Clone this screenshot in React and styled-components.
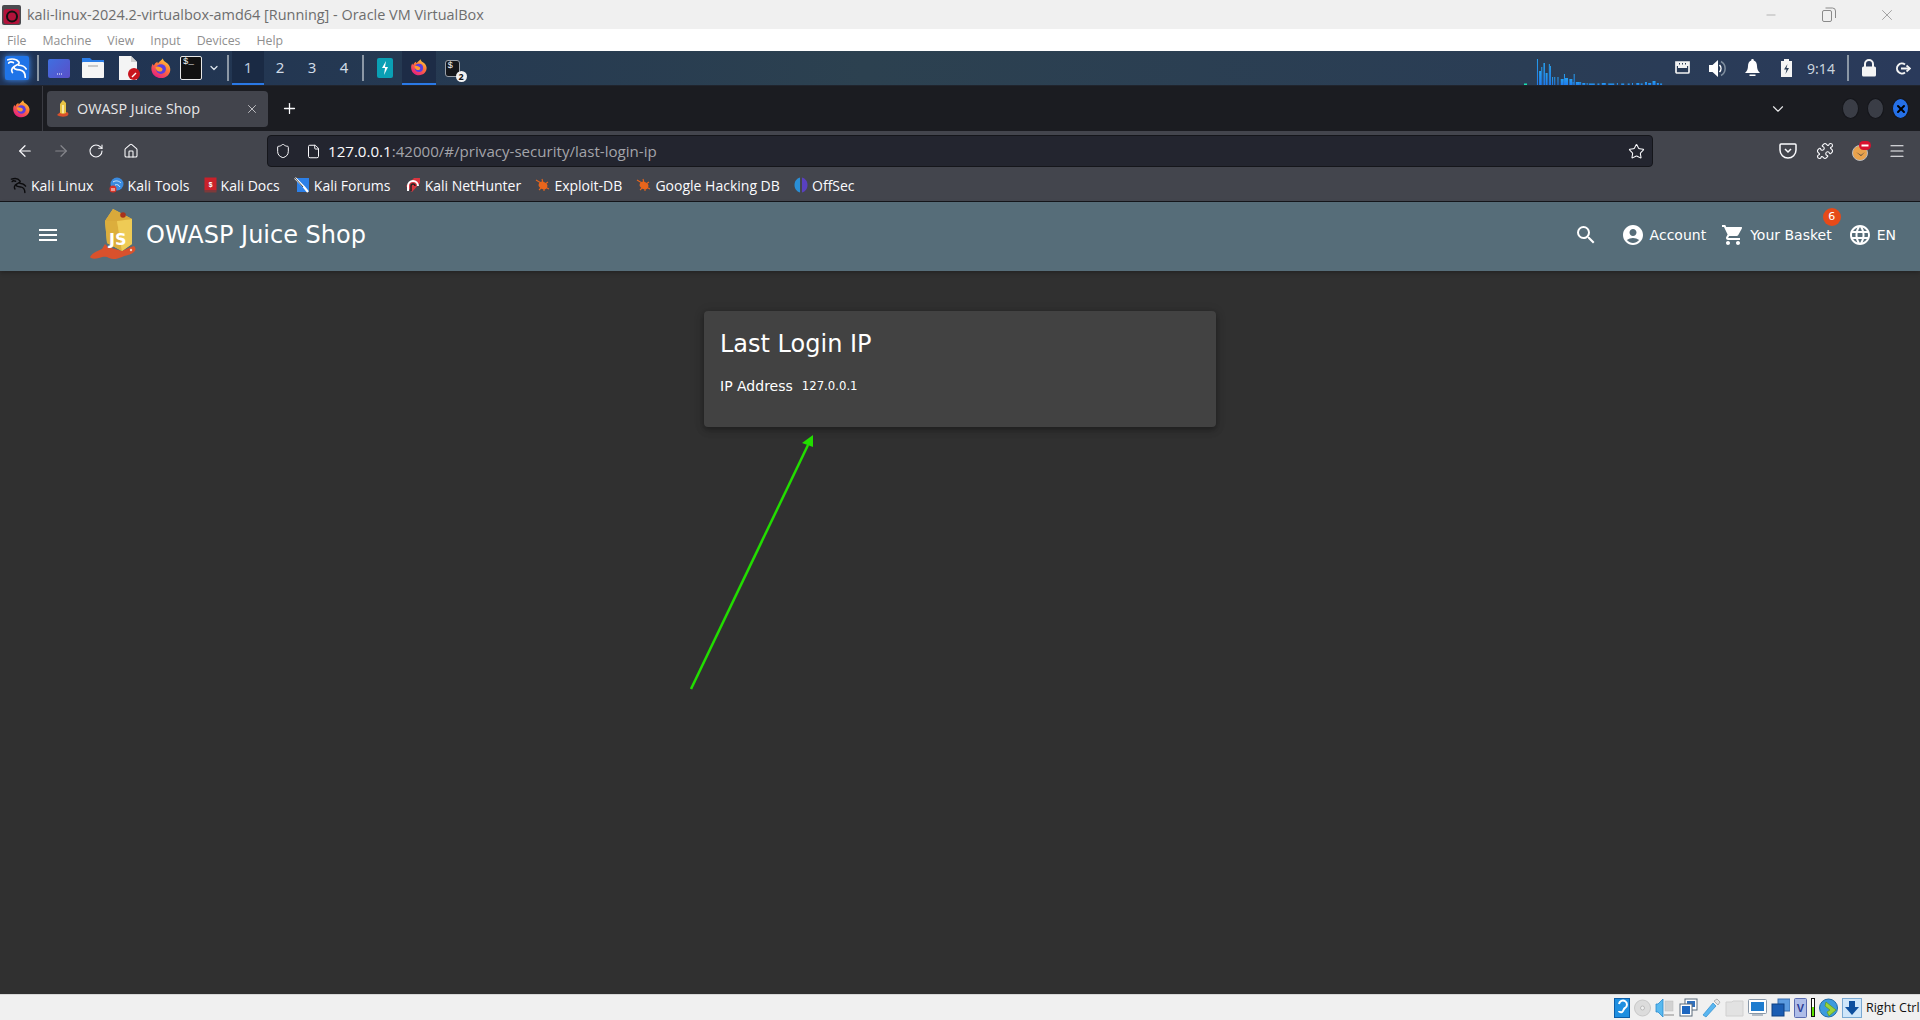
import React from "react";
import styled, { createGlobalStyle } from "styled-components";
import { ArrowLeft, ArrowRight, RotateCw, Home, Shield, File, Star, Puzzle, Menu, X, Plus, ChevronDown, Minus } from "lucide-react";
import { MdMenu, MdSearch, MdAccountCircle, MdShoppingCart, MdLanguage } from "react-icons/md";

const Global = createGlobalStyle`
  html, body { margin: 0; padding: 0; height: 100%; background: #303030; overflow: hidden; }
  #root { height: 100%; }
  * { box-sizing: border-box; }
`;

const Page = styled.div`
  height: 1020px; width: 1920px; display: flex; flex-direction: column;
  font-family: "Noto Sans", "Open Sans", sans-serif;
`;

/* host window */
const TitleBar = styled.div`
  height: 29px; background: #f0f0f0; display: flex; align-items: center; padding-left: 2px;
`;
const TitleText = styled.span`
  margin-left: 6px; font-size: 14.45px; color: #6d6d6d; font-family: "Open Sans", sans-serif; white-space: nowrap;
`;
const WinButtons = styled.div`
  margin-left: auto; display: flex; align-items: center; color: #8a8a8a;
`;
const WinButton = styled.span`
  width: 58px; display: flex; justify-content: center;
`;
const MenuBar = styled.div`
  height: 22px; background: #fff; display: flex; align-items: center; padding-left: 7px; gap: 16px;
  font-family: "Open Sans", sans-serif; font-size: 12.3px; color: #8f8f8f;
`;

/* guest panel */
const Panel = styled.div`
  height: 35px; display: flex; align-items: stretch; color: #dce4ee;
  background: linear-gradient(90deg, #1f3253 0%, #2c4150 45%, #2a3d55 80%, #2a3a5b 100%);
  border-bottom: 1px solid #20242d;
`;
const Slot = styled.div`
  width: ${p => p.$w}px; flex: none; display: flex; align-items: center; justify-content: center;
`;
const PanelSep = styled.div`
  width: 2px; height: 26px; background: #8b97a5; flex: none; align-self: center;
  margin: 0 ${p => p.$r ?? 3}px 0 ${p => p.$l ?? 3}px;
`;
const Workspace = styled.div`
  width: 32px; flex: none; display: flex; align-items: center; justify-content: center; font-size: 15px;
  color: ${p => p.$active ? "#b9c9dc" : "#d0dbe7"};
  background: ${p => p.$active ? "#1a2a44" : "transparent"};
  border-bottom: 2px solid ${p => p.$active ? "#2a79e6" : "transparent"};
`;
const ActiveApp = styled(Slot)`
  background: #1d2c46; border-bottom: 2px solid #2a79e6;
`;
const PanelRight = styled.div`
  margin-left: auto; display: flex; align-items: stretch;
`;
const Graph = styled.svg`
  width: 142px; height: 34px; flex: none; display: block;
`;
const Clock = styled(Slot)`
  font-size: 14px; color: #c9d3dd;
`;
const KaliTile = styled.div`
  width: 24px; height: 24px; border-radius: 2px; background: #1f74e8; box-shadow: 0 0 6px #3f8ffb;
  display: flex; align-items: center; justify-content: center;
`;
const Tile = styled.div`
  width: ${p => p.$w}px; height: ${p => p.$h}px; background: ${p => p.$bg}; border: ${p => p.$bd || "none"}; border-radius: ${p => p.$r || 2}px;
  position: relative; flex: none;
`;
const TermText = styled.span`
  position: absolute; left: 2px; top: 0; font: 9px "Liberation Mono", monospace; color: #fff;
`;
const CountBadge = styled.span`
  position: absolute; right: -8px; bottom: -6px; width: 11px; height: 11px; border-radius: 50%;
  background: #f2f2f2; color: #111; font-size: 9px; font-weight: 700; line-height: 11px; text-align: center;
`;

/* browser */
const TabStrip = styled.div`
  height: 45px; background: #1b1c21; display: flex; align-items: center; position: relative;
`;
const TabDivider = styled.div`
  width: 1px; height: 45px; background: #3a3b42; flex: none; margin-right: 4px;
`;
const Tab = styled.div`
  width: 221px; height: 36px; background: #42444c; border-radius: 4px; display: flex; align-items: center;
  padding-left: 10px; color: #e6e6e8; flex: none;
`;
const TabLabel = styled.span`
  margin-left: 8px; flex: 1; white-space: nowrap; font-family: "Open Sans", sans-serif; font-size: 14.4px;
`;
const TabClose = styled.span`
  width: 32px; display: flex; justify-content: center; color: #cfcfd2;
`;
const StripRight = styled.div`
  margin-left: auto; display: flex; align-items: center;
`;
const Chevron = styled.span`
  display: flex; color: #e8e8ea; margin-right: 55px;
`;
const WinDots = styled.div`
  display: flex; gap: 8px; padding-right: 11px;
`;
const WinDot = styled.span`
  width: 17px; height: 21px; border-radius: 50%; background: ${p => p.$bg}; border: 1px solid #14151a;
  display: flex; align-items: center; justify-content: center; color: #000;
`;
const NavBar = styled.div`
  height: 40px; background: #43454d; display: flex; align-items: center; color: #fbfbfe;
`;
const NavSlot = styled.div`
  width: ${p => p.$w}px; flex: none; display: flex; justify-content: center; align-items: center;
  color: ${p => p.$dim ? "#85868c" : "#fbfbfe"};
`;
const UrlBar = styled.div`
  width: 1386px; height: 32px; background: #23252f; border: 1px solid #15161b; border-radius: 4px;
  display: flex; align-items: center; flex: none; font-size: 15.1px; color: #a3a4aa; font-family: "Open Sans", sans-serif;
`;
const UrlText = styled.span`
  padding-bottom: 1px;
`;
const UrlHost = styled.span`
  color: #fbfbfe;
`;
const UrlStar = styled.span`
  margin-left: auto; width: 32px; display: flex; justify-content: center; color: #fbfbfe;
`;
const Bookmarks = styled.div`
  height: 31px; background: #43454d; display: flex; align-items: center; padding: 0 0 2px 10px;
  border-bottom: 1px solid #15161b; color: #fbfbfe; font-size: 14px; font-family: "Open Sans", sans-serif;
`;
const Bookmark = styled.div`
  display: flex; align-items: center; gap: 4px; margin-right: 14.2px; white-space: nowrap;
`;

/* juice shop */
const ShopBar = styled.header`
  height: 69px; flex: none; background: #566d79; display: flex; align-items: center; color: #fff; padding-bottom: 4px;
  font-family: "DejaVu Sans", sans-serif; box-shadow: 0 2px 4px rgba(0,0,0,.25); position: relative; z-index: 1;
`;
const MenuButton = styled.span`
  display: flex; margin-left: 36px; width: 54px;
`;
const ShopTitle = styled.span`
  margin-left: 10px; font-size: 24px; white-space: nowrap;
`;
const ShopActions = styled.div`
  margin-left: auto; display: flex; align-items: center; font-size: 14px; padding-right: 24px;
`;
const ShopAction = styled.div`
  display: flex; align-items: center; gap: ${p => p.$gap ?? 6}px; margin-left: ${p => p.$ml}px; position: relative;
`;
const Badge = styled.span`
  position: absolute; right: -9px; top: -15px; width: 18px; height: 18px; border-radius: 50%;
  background: #e64a19; color: #fff; font-size: 11px; text-align: center; line-height: 18px;
`;
const Main = styled.main`
  flex: 1; background: #303030; position: relative; display: flex; justify-content: center; align-items: flex-start;
  padding-top: 40px;
`;
const Card = styled.section`
  width: 512px; height: 116px; background: #424242; border-radius: 4px; padding: 18px 16px; color: #fff;
  font-family: "DejaVu Sans", sans-serif;
  box-shadow: 0 2px 4px rgba(0,0,0,.2), 0 4px 8px rgba(0,0,0,.14), 0 1px 12px rgba(0,0,0,.12);
`;
const CardTitle = styled.h1`
  margin: 0; font-size: 24px; font-weight: 400; line-height: 30px;
`;
const CardRow = styled.div`
  margin-top: 16px; display: flex; align-items: center; gap: 9px; font-size: 14px; line-height: 20px;
`;
const CardValue = styled.span`
  font-size: 11.7px; padding-top: 1px;
`;
const ArrowLayer = styled.svg`
  position: absolute; left: 0; top: 0; width: 1920px; height: 723px; pointer-events: none;
`;

/* status bar */
const StatusBar = styled.footer`
  height: 26px; flex: none; background: #f0f0f0; border-top: 1px solid #d8d8d8; display: flex; align-items: center;
  justify-content: flex-end; font-family: "Open Sans", "Liberation Sans", sans-serif; font-size: 12.5px; color: #111;
`;
const StatusIcons = styled.div`
  display: flex; align-items: center; gap: 4px; margin-right: 4px;
`;
const StatusText = styled.span`
  white-space: nowrap; width: 54px; overflow: hidden;
`;
const Led = styled.div`
  width: 4px; height: 19px; border: 1px solid #111; background: linear-gradient(180deg, #fff 45%, #5ce000 45%);
`;

const Fox = ({ s = 22 }) => (
  <svg width={s} height={s} viewBox="0 0 24 24">
    <defs>
      <linearGradient id="fxa" x1="0.8" y1="0" x2="0.2" y2="1"><stop offset="0" stopColor="#ffd43a" /><stop offset=".45" stopColor="#ff7139" /><stop offset="1" stopColor="#e31587" /></linearGradient>
    </defs>
    <path d="M12 23C5.9 23 1.5 18.3 1.5 12.5c0-2 .6-3.8 1.6-5.2.2 1 .6 1.7 1.2 2.1.5-2 2-3.6 3.9-4.3-.2 1 0 1.6.5 2C9.5 5 12 4.2 14 1.5c.5 2.2 1.5 3 3.2 4.2 2.9 1.9 4.5 4 4.9 7 .5 5.6-4.1 10.3-10.1 10.3z" fill="url(#fxa)" />
    <circle cx="12" cy="13.2" r="5.4" fill="#5a3ee0" />
    <path d="M6 11c2-1.2 3.5-.6 5.5.2 2 .8 3 2.4 1.5 4-1.6 1.2-4.4.8-5.8-1C6.4 13.200 6 12 6 11z" fill="#ff9a30" />
  </svg>
);

const JuiceLogo = () => (
  <svg width="46" height="52" viewBox="0 0 46 52">
    <path d="M0 48c2-4 7-6 12-8l3-5 3 3 14 4 9-4 3-1c2 2 2 4 0 6-3 3-8 3-12 5-5 2-9 3-13 1-3-2-6-1-10 0-4 1-8 1-9-1z" fill="#d9512c" />
    <circle cx="41" cy="41" r="1.200" fill="#f3d0c4" />
    <path d="M15 12L23 0l19 10v25l-10 7-15-8z" fill="#e8c04a" />
    <path d="M15 12l12 0 5 30-15-8z" fill="#dcae3c" />
    <path d="M27 12l15-2v25l-10 7z" fill="#eecb55" />
    <path d="M15 12L23 0l19 10-15 2z" fill="#d9a93a" />
    <circle cx="33" cy="6" r="2.800" fill="#a8321c" />
    <text x="19" y="36" fontFamily="DejaVu Sans" fontSize="16" fontWeight="700" fill="#fff">JS</text>
  </svg>
);

const TabFavicon = () => (
  <svg width="12" height="17" viewBox="0 0 12 17">
    <path d="M0 15c2-2 3-3 5-3h4c3 0 3 3 1 4-3 1-7 1-10-1z" fill="#d9512c" />
    <path d="M3 4l3-4 3 3v10l-3 1-3-1z" fill="#e8c343" />
    <path d="M6 5v8" stroke="#fff3c0" strokeWidth="1.500" />
  </svg>
);

const KaliDragon = ({ s = 22, c = "#fff", w = 1.900 }) => (
  <svg width={s} height={s} viewBox="0 0 24 24" fill="none" stroke={c} strokeWidth={w} strokeLinecap="round" strokeLinejoin="round">
    <path d="M2 3c5-1.500 10-.5 12 2.500 1.500 2.500-3 3-5 5-1.500 2 2 3.500 6 3.500 3 .5 6 3 6 8" />
    <path d="M14 9c3 0 6 1 8 4M9 10.500C6 12 5.500 15 7 17M8 6C6 5 4 5 3 6.500" />
  </svg>
);

const ToolsFav = () => (
  <svg width="16" height="16" viewBox="0 0 16 16"><circle cx="9" cy="7" r="6.500" fill="#3b8be0" /><path d="M5 5c3-2 6-1 8 1M7 8c2-1 4 0 5 2" stroke="#cfe6fa" fill="none" /><circle cx="5" cy="12" r="3.500" fill="#d8352a" /><path d="M4 11v3M6 11v3" stroke="#fff" /></svg>
);
const DocsFav = () => (
  <svg width="13" height="16" viewBox="0 0 13 16"><rect x="0.500" y="0.500" width="12" height="13" fill="#c9212a" /><rect x="0.500" y="13.500" width="12" height="2" fill="#7d3a3a" /><text x="6.500" y="10" textAnchor="middle" fontSize="7" fontWeight="700" fontFamily="Liberation Mono" fill="#fff">$</text></svg>
);
const ForumsFav = () => (
  <svg width="16" height="16" viewBox="0 0 16 16"><path d="M3 1h12v13a1 1 0 01-1 1H3z" fill="#2d80e8" /><path d="M1 1l9 9 4 5" stroke="#fff" strokeWidth="2.200" fill="none" /><path d="M1 1l8 9" stroke="#222" strokeWidth=".8" fill="none" /></svg>
);
const HunterFav = () => (
  <svg width="16" height="16" viewBox="0 0 16 16"><path d="M1 9L9 1h6v5l-8 9z" fill="#d9353f" /><path d="M3 14V9a5 5 0 0110 0" stroke="#fff" strokeWidth="2" fill="none" /><path d="M6 14V9a2 2 0 014 0" stroke="#222" strokeWidth="1.500" fill="none" /></svg>
);
const Bug = () => (
  <svg width="15" height="14" viewBox="0 0 15 14"><ellipse cx="8" cy="7.500" rx="4.500" ry="3.500" transform="rotate(25 8 7.500)" fill="#e8651c" /><path d="M1 2l5 3M4 12l3-3M7 1l1 4M13 4l-3 2M14 11l-4-2M9 13l0-3" stroke="#e8651c" strokeWidth="1.100" /></svg>
);
const OffSecIcon = () => (
  <svg width="14" height="16" viewBox="0 0 14 16"><path d="M6 .5C2.500 1.500.5 4.500.5 8s2 6.500 5.500 7.500z" fill="#2a8fd6" /><path d="M8 .5c3.500 1 5.500 4 5.500 7.500S11.500 14.500 8 15.500z" fill="#5940c0" /></svg>
);

const bars = [[0,1.5,3],[12,26,1],[14,14,2],[16,18,1],[18,22,1.500],[20,12,2],[23,21,1],[24,19,1],[26,8,1],[28,8,1],[31,8,1],[34,6,3],[37,11,1],[38,7,3],[42,6,3],[45,3,1],[46,11,1],[48,3,4],[52,3,1],[54,2,3],[58,2,1],[60,1.500,6],[68,1.500,2],[72,2,4],[78,1.500,6],[86,2,1],[90,1.500,3],[96,1.500,2],[100,2,1],[104,2,3],[108,1.500,2],[112,3,2],[115,2,3],[119,4,3],[123,2,2],[126,1.500,2]];

const NetIcon = () => (
  <svg width="15" height="14" viewBox="0 0 15 14"><path d="M1 1h13v10a1 1 0 01-1 1H2a1 1 0 01-1-1z" fill="none" stroke="#f2f2f2" strokeWidth="1.700" /><path d="M1 1h13v4h-2v2H3V5H1z" fill="#f2f2f2" /><path d="M4.500 2v1.500M7.500 2v1.500M10.500 2v1.500" stroke="#2a3d55" /></svg>
);
const SpeakerIcon = () => (
  <svg width="18" height="19" viewBox="0 0 18 19"><path d="M0 6h3.500L9 1v17l-5.500-5H0z" fill="#fff" /><path d="M10.500 6a5 5 0 010 7" stroke="#fff" strokeWidth="1.500" fill="none" /><path d="M12 2.500a8 8 0 010 14" stroke="#7f8e9e" strokeWidth="1.500" fill="none" /></svg>
);
const BellIcon = () => (
  <svg width="15" height="18" viewBox="0 0 15 18"><path d="M7.500 0a1.200 1.200 0 011.200 1.500C11 2.300 12 4.500 12 7c0 3 1 5 3 7H0c2-2 3-4 3-7 0-2.500 1-4.700 3.300-5.500A1.200 1.200 0 017.500 0z" fill="#fff" /><rect x="4.500" y="15.500" width="6" height="1.500" fill="#fff" /></svg>
);
const BatteryIcon = () => (
  <svg width="11" height="18" viewBox="0 0 11 18"><path d="M3 0h5v2h3v16H0V2h3z" fill="#f4f4f4" /><path d="M6.500 5L3 10.500h2.500L4.500 15l3.500-6H5.500z" fill="#2a3d55" /></svg>
);
const LockIcon = () => (
  <svg width="14" height="18" viewBox="0 0 14 18"><path d="M3 8V5a4 4 0 018 0v3" fill="none" stroke="#f4f4f4" strokeWidth="2" /><rect y="7.500" width="14" height="10" rx="1.500" fill="#f4f4f4" /></svg>
);
const LogoutIcon = () => (
  <svg width="15" height="13" viewBox="0 0 15 13" fill="none" stroke="#f4f4f4" strokeWidth="2"><path d="M9 2.500a5 5 0 100 8" /><path d="M5 6.500h8" /><path d="M10.500 3.500l3.500 3-3.500 3" strokeWidth="1.700" /></svg>
);

/* status icons */
const HddI = () => <svg width="16" height="20" viewBox="0 0 16 20"><rect x=".5" y=".5" width="15" height="19" fill="#1f8fe0" stroke="#0c5ea8" /><path d="M5 6a4 4 0 116 4c-2 1-1 3-3 4-2 .5-3-.5-3-1" stroke="#fff" strokeWidth="2" fill="none" /></svg>;
const CdI = () => <svg width="17" height="18" viewBox="0 0 17 18"><circle cx="8.500" cy="9" r="8" fill="#dcdcdc" stroke="#c8c8c8" /><circle cx="8.500" cy="9" r="2" fill="#f2f2f2" stroke="#bbb" /></svg>;
const AudioI = () => <svg width="20" height="20" viewBox="0 0 20 20"><path d="M1 6h2l5-5v18l-5-5H1z" fill="#59b9ef" stroke="#2a8ccf" strokeWidth=".8" /><rect x="10" y="3" width="8" height="10" fill="#d2d2d2" stroke="#bdbdbd" strokeWidth=".5" /><rect x="9" y="16" width="10" height="2" fill="#bdbdbd" /></svg>;
const NetI = () => <svg width="19" height="19" viewBox="0 0 19 19"><rect x="6" y="1" width="12" height="11" fill="#fff" stroke="#5a6a7a" /><rect x="8" y="3" width="8" height="6" fill="#2f6fbd" /><rect x="1" y="6" width="12" height="12" fill="#fff" stroke="#5a6a7a" /><rect x="3" y="8" width="8" height="8" fill="#1d66c0" /></svg>;
const UsbI = () => <svg width="19" height="20" viewBox="0 0 19 20"><path d="M1 17L11 5l3 3-10 11z" fill="#5ab6f0" stroke="#2a8ccf" strokeWidth=".7" /><path d="M12 3l3-2 3 3-2 3z" fill="#e4e4e4" stroke="#999" strokeWidth=".7" /></svg>;
const FolderI = () => <svg width="19" height="18" viewBox="0 0 19 18"><path d="M1 3h6l1-1h10v15H1z" fill="#e2e2e2" stroke="#d0d0d0" /></svg>;
const DisplayI = () => <svg width="19" height="19" viewBox="0 0 19 19"><rect x=".5" y="1.500" width="18" height="14" rx="1" fill="#fff" stroke="#8797a8" /><rect x="3" y="4" width="13" height="9" fill="#1d7ccf" /><rect x="4" y="16" width="11" height="2" fill="#b4bcc5" /></svg>;
const CaptureI = () => <svg width="19" height="19" viewBox="0 0 19 19"><rect x="7" y="1" width="12" height="12" fill="#5b9be0" stroke="#386fb0" /><rect x="1" y="6" width="12" height="12" fill="#1a5db3" stroke="#0e4182" /></svg>;
const VI = () => <svg width="13" height="20" viewBox="0 0 13 20"><rect x=".5" y=".5" width="12" height="19" rx="1" fill="#aebde8" stroke="#5a6cb0" /><text x="6.500" y="14" textAnchor="middle" fontSize="11" fontWeight="700" fontFamily="Liberation Sans" fill="#2c3e96">V</text></svg>;
const GlobeI = () => <svg width="19" height="20" viewBox="0 0 19 20"><circle cx="9.500" cy="10" r="9" fill="#3c9bdd" stroke="#1f6ba8" /><path d="M7 4l10 8-7 6-2-4 3-2-5-4z" fill="#9ad33c" stroke="#5d9a18" strokeWidth=".7" /></svg>;
const DownI = () => <svg width="20" height="20" viewBox="0 0 20 20"><rect x=".5" y=".5" width="19" height="19" fill="#cfe6fa" stroke="#7aa9d2" /><path d="M7 3h6v6h4l-7 8-7-8h4z" fill="#0e4f9e" /></svg>;

const bookmarks = [
  [<KaliDragon key="a" s={17} c="#0b0b0d" w={2} />, "Kali Linux"],
  [<ToolsFav key="b" />, "Kali Tools"],
  [<DocsFav key="c" />, "Kali Docs"],
  [<ForumsFav key="d" />, "Kali Forums"],
  [<HunterFav key="e" />, "Kali NetHunter"],
  [<Bug key="f" />, "Exploit-DB"],
  [<Bug key="g" />, "Google Hacking DB"],
  [<OffSecIcon key="h" />, "OffSec"],
];

export default function App() {
  return (
    <Page>
      <Global />
      <TitleBar>
        <svg width="19" height="20" viewBox="0 0 19 20">
          <rect width="19" height="20" rx="2" fill="#4a4a4e" />
          <rect x="1.500" y="4" width="16" height="15" rx="3" fill="#b3123a" />
          <circle cx="10" cy="11.500" r="5" fill="none" stroke="#111" strokeWidth="2" />
        </svg>
        <TitleText>kali-linux-2024.2-virtualbox-amd64 [Running] - Oracle VM VirtualBox</TitleText>
        <WinButtons>
          <WinButton><Minus size={14} strokeWidth={1} /></WinButton>
          <WinButton>
            <svg width="14" height="15" viewBox="0 0 14 15" fill="none" stroke="#8a8a8a"><rect x=".5" y="3.500" width="9" height="11" rx="1.500" /><path d="M3.500 1h7a3 3 0 013 3v7" /></svg>
          </WinButton>
          <WinButton><X size={18} strokeWidth={1} /></WinButton>
          <Slot $w={4} />
        </WinButtons>
      </TitleBar>
      <MenuBar>
        <span>File</span><span>Machine</span><span>View</span><span>Input</span><span>Devices</span><span>Help</span>
      </MenuBar>

      <Panel>
        <Slot $w={34}><KaliTile><KaliDragon /></KaliTile></Slot>
        <PanelSep />
        <Slot $w={34}>
          <Tile $w={22} $h={19} $bg="linear-gradient(135deg,#3f6fe0,#5a4fc8)"><svg width="22" height="19" viewBox="0 0 22 19"><path d="M9 15h1M11 15h1M13 15h1" stroke="#fff" /></svg></Tile>
        </Slot>
        <Slot $w={34}>
          <svg width="22" height="22" viewBox="0 0 22 22"><path d="M0 1h8l2 2h12v5H0z" fill="#2a7de8" /><rect y="5" width="22" height="16" fill="#f5f5f5" rx="1" /><rect x="6" y="8" width="10" height="2" fill="#c9c9c9" /></svg>
        </Slot>
        <Slot $w={38}>
          <svg width="22" height="24" viewBox="0 0 22 24"><path d="M1 0h12l6 6v18H1z" fill="#f4f4f4" /><path d="M13 0l6 6h-6z" fill="#cfcfcf" /><circle cx="16" cy="18" r="6" fill="#c8141e" /><path d="M13.500 20.500l4-4 1 1-4 4z" fill="#fff" /></svg>
        </Slot>
        <Slot $w={26}><Fox /></Slot>
        <Slot $w={34}>
          <Tile $w={22} $h={24} $bg="#111" $bd="1px solid #e8e8e8"><TermText>$_</TermText></Tile>
        </Slot>
        <Slot $w={12}><ChevronDown size={14} strokeWidth={2.500} /></Slot>
        <PanelSep $l={7} />
        <Workspace $active>1</Workspace>
        <Workspace>2</Workspace>
        <Workspace>3</Workspace>
        <Workspace>4</Workspace>
        <PanelSep $l={2} $r={3} />
        <Slot $w={35}>
          <Tile $w={16} $h={20} $bg="#0aa0b4"><svg width="16" height="20" viewBox="0 0 16 20"><path d="M9 3L5 10h3l-1 7 4-8H8z" fill="#fff" /></svg></Tile>
        </Slot>
        <ActiveApp $w={34}><Fox s={18} /></ActiveApp>
        <Slot $w={32}>
          <Tile $w={15} $h={17} $bg="#15171b" $bd="1px solid #9aa0a8" $r={3}><TermText>$</TermText><CountBadge>2</CountBadge></Tile>
        </Slot>
        <PanelRight>
          <Graph viewBox="-1 0 142 34">
            <defs><linearGradient id="gb" x1="0" y1="0" x2="0" y2="1"><stop offset="0" stopColor="#26a0f0" /><stop offset="1" stopColor="#1e7cf0" /></linearGradient></defs>
            {bars.map(([x, h, w], i) => (
              <rect key={i} x={x * 1.08} y={34 - h} width={w} height={h} fill={i === 0 ? "#19e0b0" : "url(#gb)"} />
            ))}
          </Graph>
          <Slot $w={35}><NetIcon /></Slot>
          <Slot $w={35}><SpeakerIcon /></Slot>
          <Slot $w={34}><BellIcon /></Slot>
          <Slot $w={34}><BatteryIcon /></Slot>
          <Clock $w={36}>9:14</Clock>
          <PanelSep $l={8} $r={3} />
          <Slot $w={34}><LockIcon /></Slot>
          <Slot $w={34}><LogoutIcon /></Slot>
        </PanelRight>
      </Panel>

      <TabStrip>
        <Slot $w={42}><Fox s={19} /></Slot>
        <TabDivider />
        <Tab>
          <TabFavicon />
          <TabLabel>OWASP Juice Shop</TabLabel>
          <TabClose><X size={14} strokeWidth={1.500} /></TabClose>
        </Tab>
        <NavSlot $w={42}><Plus size={17} strokeWidth={1.800} /></NavSlot>
        <StripRight>
          <Chevron><ChevronDown size={18} strokeWidth={1.500} /></Chevron>
          <WinDots>
            <WinDot $bg="#3a3d46" />
            <WinDot $bg="#3a3d46" />
            <WinDot $bg="#2570e8"><X size={12} strokeWidth={4} /></WinDot>
          </WinDots>
        </StripRight>
      </TabStrip>

      <NavBar>
        <Slot $w={6} />
        <NavSlot $w={37}><ArrowLeft size={18} strokeWidth={1.600} /></NavSlot>
        <NavSlot $w={36} $dim><ArrowRight size={18} strokeWidth={1.600} /></NavSlot>
        <NavSlot $w={34}><RotateCw size={16} strokeWidth={1.600} /></NavSlot>
        <NavSlot $w={36}><Home size={16} strokeWidth={1.600} /></NavSlot>
        <Slot $w={118} />
        <UrlBar>
          <NavSlot $w={30}><Shield size={16} strokeWidth={1.500} /></NavSlot>
          <NavSlot $w={30}><File size={15} strokeWidth={1.600} /></NavSlot>
          <UrlText><UrlHost>127.0.0.1</UrlHost>:42000/#/privacy-security/last-login-ip</UrlText>
          <UrlStar><Star size={17} strokeWidth={1.500} /></UrlStar>
        </UrlBar>
        <PanelRight>
          <NavSlot $w={36}>
            <svg width="18" height="16" viewBox="0 0 18 16" fill="none" stroke="#fbfbfe" strokeWidth="1.500"><path d="M2 1h14a1 1 0 011 1v5a8 8 0 01-16 0V2a1 1 0 011-1z" /><path d="M6 6l3 3 3-3" /></svg>
          </NavSlot>
          <NavSlot $w={37}><Puzzle size={18} strokeWidth={1.500} /></NavSlot>
          <NavSlot $w={36}>
            <svg width="20" height="20" viewBox="0 0 20 20"><circle cx="9" cy="12" r="7.500" fill="#e9a24c" stroke="#b9bcc2" /><path d="M5 11l5 3 4-3-4 4z" fill="#3b3d44" /><rect x="8" y="0" width="12" height="9" rx="4.500" fill="#d7122f" /><rect x="10.500" y="3.500" width="7" height="2" fill="#fff" /></svg>
          </NavSlot>
          <NavSlot $w={35}><Menu size={18} strokeWidth={1.600} /></NavSlot>
          <Slot $w={6} />
        </PanelRight>
      </NavBar>

      <Bookmarks>
        {bookmarks.map(([icon, label], i) => (
          <Bookmark key={i}>{icon}<span>{label}</span></Bookmark>
        ))}
      </Bookmarks>

      <ShopBar>
        <MenuButton><MdMenu size={24} /></MenuButton>
        <JuiceLogo />
        <ShopTitle>OWASP Juice Shop</ShopTitle>
        <ShopActions>
          <ShopAction><MdSearch size={24} /></ShopAction>
          <ShopAction $ml={23} $gap={5}><MdAccountCircle size={24} /><span>Account</span></ShopAction>
          <ShopAction $ml={15} $gap={5}><MdShoppingCart size={24} /><span>Your Basket</span><Badge>6</Badge></ShopAction>
          <ShopAction $ml={16} $gap={5}><MdLanguage size={24} /><span>EN</span></ShopAction>
        </ShopActions>
      </ShopBar>

      <Main>
        <Card>
          <CardTitle>Last Login IP</CardTitle>
          <CardRow>
            <span>IP Address</span>
            <CardValue>127.0.0.1</CardValue>
          </CardRow>
        </Card>
        <ArrowLayer viewBox="0 271 1920 723">
          <path d="M691 689L808 445" stroke="#22dd00" strokeWidth="2.500" fill="none" />
          <path d="M813 435L802 443L813 447Z" fill="#22dd00" />
        </ArrowLayer>
      </Main>

      <StatusBar>
        <StatusIcons>
          <HddI /><CdI /><AudioI /><NetI /><UsbI /><FolderI /><DisplayI /><CaptureI /><VI /><Led /><GlobeI /><DownI />
        </StatusIcons>
        <StatusText>Right Ctrl</StatusText>
      </StatusBar>
    </Page>
  );
}
